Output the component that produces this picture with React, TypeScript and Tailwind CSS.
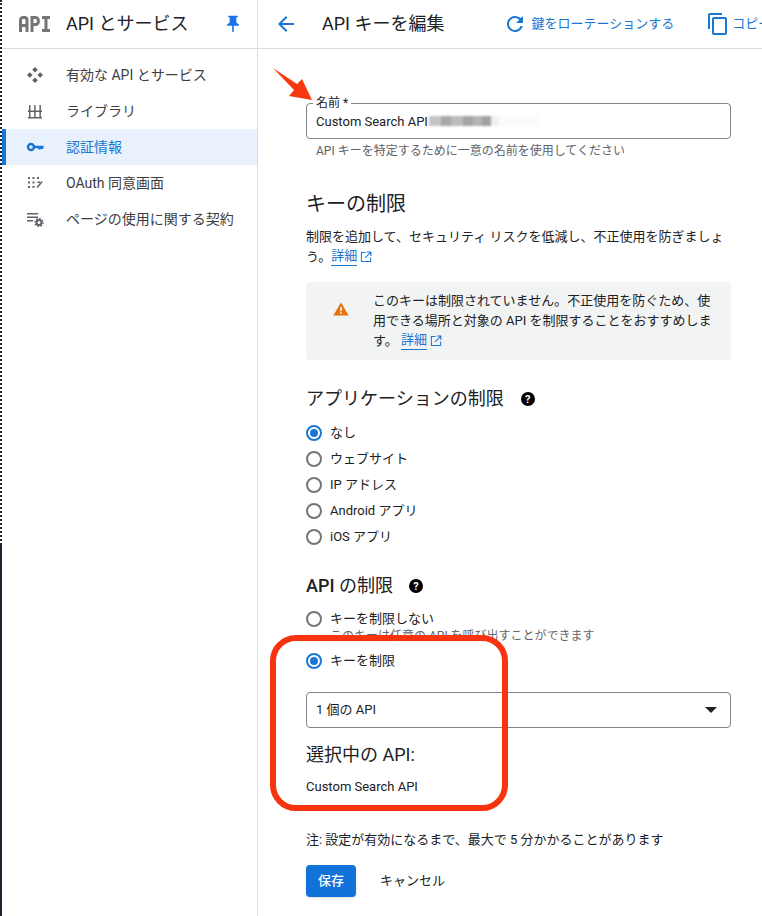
const FONT = "font-['Roboto','Noto_Sans_CJK_JP',sans-serif]";

function ApiLogo() {
  return (
    <svg className="w-[32px] h-[16px]" viewBox="0 0 32 16" fill="none" stroke="#757575" strokeWidth="3">
      <path d="M1.500 16V4a2.500 2.500 0 0 1 2.500-2.500h1.500A2.500 2.500 0 0 1 8 4v12M1.500 9.500H8" />
      <path d="M13 16V1.500h3.500a2.800 2.800 0 0 1 2.800 2.800v1.400a2.800 2.800 0 0 1-2.800 2.800H13" />
      <path d="M23 1.500h8M27 1.500v13M23 14.500h8" />
    </svg>
  );
}

function PinIcon() {
  return (
    <svg className="w-[20px] h-[20px]" viewBox="0 0 24 24" fill="#1a73e8">
      <path d="M16 9V4h1c.55 0 1-.45 1-1s-.45-1-1-1H7c-.55 0-1 .45-1 1s.45 1 1 1h1v5c0 1.660-1.340 3-3 3v2h5.970v7l1 1 1-1v-7H19v-2c-1.660 0-3-1.340-3-3z" />
    </svg>
  );
}

function ApisIcon() {
  return (
    <svg width="18" height="18" viewBox="0 0 18 18" fill="#5f6368">
      <path d="M9 1l2.800 2.800L9 6.600 6.200 3.800zM9 11.400l2.800 2.800L9 17l-2.800-2.800zM3.800 6.200L6.600 9l-2.800 2.800L1 9zM14.200 6.200L17 9l-2.800 2.800L11.400 9z" />
    </svg>
  );
}

function LibraryIcon() {
  return (
    <svg width="18" height="18" viewBox="0 0 18 18" fill="#5f6368">
      <path d="M2 15h14v1.500H2zM2 8.500h14V10H2zM3 3h1.500v5.500H3zM8.200 3h1.500v5.500H8.200zM13.400 3h1.500v5.500h-1.500zM3 10h1.500v5H3zM8.200 10h1.500v5H8.200zM13.400 10h1.500v5h-1.500z" />
    </svg>
  );
}

function KeyIcon() {
  return (
    <svg width="18" height="18" viewBox="0 0 18 18" fill="none" stroke="#1976d2" strokeWidth="2.400">
      <circle cx="5" cy="9" r="3" />
      <path d="M8 9h9.500M13.500 9v2.500M16 9v2" />
    </svg>
  );
}

function ConsentIcon() {
  return (
    <svg width="18" height="18" viewBox="0 0 18 18" fill="#5f6368">
      <path d="M2 3h2v2H2zM6.500 3h2v2h-2zM11 3h2v2h-2zM2 7.500h2v2H2zM6.500 7.500h2v2h-2zM2 12h2v2H2zM6.500 12h2v2h-2zM10.500 13l5-6 1.200 1-5 6zM11.500 7.500h2.500V9h-2.500z" />
    </svg>
  );
}

function TermsIcon() {
  return (
    <svg width="18" height="18" viewBox="0 0 18 18" fill="#5f6368">
      <path d="M1 3h11v1.500H1zM1 6.500h11V8H1zM1 10h6v1.500H1z" />
      <circle cx="13" cy="12.500" r="2.500" fill="none" stroke="#5f6368" strokeWidth="2" />
      <circle cx="13" cy="12.500" r="4" fill="none" stroke="#5f6368" strokeWidth="1.400" strokeDasharray="1.600 1.500" />
    </svg>
  );
}

function ExternalIcon() {
  return (
    <svg className="w-[12px] h-[12px] ml-[3px]" viewBox="0 0 13 13" fill="none" stroke="#1976d2" strokeWidth="1.100">
      <path d="M6 1.500H1.500v10h10V7M7.500 1.200h4.300v4.300M11.500 1.500L5.500 7.500" />
    </svg>
  );
}

function WarnIcon() {
  return (
    <svg className="w-[16px] h-[14px] mt-[11px] shrink-0" viewBox="0 0 16 14">
      <path d="M8 .5L15.700 13.500H.300z" fill="#e8710a" />
      <path d="M7.200 5h1.600v4.200H7.200zM7.200 10.200h1.600v1.600H7.200z" fill="#fff" />
    </svg>
  );
}

function NavItem({ icon, label, active }: { icon: React.ReactNode; label: string; active?: boolean }) {
  return (
    <div className={`flex items-center h-9 ${active ? "bg-[#e8f1fc] border-l-[4px] border-[#1976d2] pl-[20px] text-[#1976d2]" : "pl-[24px] text-[#3c4043]"}`}>
      <span className="w-[18px] h-[18px] flex items-center justify-center mr-[22px]">{icon}</span>
      <span className="text-sm">{label}</span>
    </div>
  );
}

function Radio({ label, checked }: { label: string; checked?: boolean }) {
  return (
    <div className="flex items-center h-[26px]">
      <span className={`w-4 h-4 rounded-full border-2 flex items-center justify-center ${checked ? "border-[#1976d2]" : "border-[#757575]"}`}>
        {checked && <span className="w-2 h-2 rounded-full bg-[#1976d2]" />}
      </span>
      <span className="ml-2 text-[13px] text-[#202124]">{label}</span>
    </div>
  );
}

function HelpDot() {
  return (
    <span className="inline-flex items-center justify-center w-[14px] h-[14px] rounded-full bg-black text-white text-[11px] font-bold leading-none">?</span>
  );
}

function Detail() {
  return (
    <span className="inline-flex items-center align-top text-[#1976d2] text-[13px]">
      <span className="border-b border-[#1976d2] leading-[18px]">詳細</span>
      <ExternalIcon />
    </span>
  );
}

export default function App() {
  return (
    <div className={`${FONT} relative flex w-[762px] h-[916px] overflow-hidden bg-white text-[#202124]`}>
      {/* screenshot edge */}
      <div className="w-[2px] shrink-0 flex flex-col">
        <div className="h-[545px] border-l-2 border-dotted border-[#1e2633]" />
        <div className="flex-1 bg-[#1e2633]" />
      </div>

      {/* left nav */}
      <aside className="w-[256px] shrink-0 border-r border-[#dadce0]">
        <div className="flex items-center h-[49px] border-b border-[#dadce0] pl-[17px] pr-[14px]">
          <ApiLogo />
          <span className="ml-[15px] text-lg text-[#202124]">API とサービス</span>
          <span className="ml-auto"><PinIcon /></span>
        </div>
        <nav className="pt-2">
          <NavItem icon={<ApisIcon />} label="有効な API とサービス" />
          <NavItem icon={<LibraryIcon />} label="ライブラリ" />
          <NavItem icon={<KeyIcon />} label="認証情報" active />
          <NavItem icon={<ConsentIcon />} label="OAuth 同意画面" />
          <NavItem icon={<TermsIcon />} label="ページの使用に関する契約" />
        </nav>
      </aside>

      {/* main */}
      <main className="flex-1 min-w-0">
        <div className="flex items-center h-[49px] border-b border-[#dadce0] pl-[16px] whitespace-nowrap overflow-hidden">
          <svg className="w-6 h-6 shrink-0" viewBox="0 0 24 24" fill="#1976d2">
            <path d="M20 11H7.830l5.590-5.590L12 4l-8 8 8 8 1.410-1.410L7.830 13H20v-2z" />
          </svg>
          <span className="ml-[24px] text-lg text-[#202124]">API キーを編集</span>
          <svg className="ml-[59px] w-6 h-6 shrink-0" viewBox="0 0 24 24" fill="#1976d2">
            <path d="M17.650 6.350C16.200 4.900 14.210 4 12 4c-4.420 0-7.990 3.580-7.990 8s3.570 8 7.990 8c3.730 0 6.840-2.550 7.730-6h-2.080c-.82 2.330-3.040 4-5.650 4-3.310 0-6-2.690-6-6s2.690-6 6-6c1.660 0 3.140.69 4.220 1.780L13 11h7V4l-2.350 2.350z" />
          </svg>
          <span className="ml-[4px] text-[13px] text-[#1976d2]">鍵をローテーションする</span>
          <svg className="ml-[32px] w-6 h-6 shrink-0" viewBox="0 0 24 24" fill="#1976d2">
            <path d="M16 1H4c-1.100 0-2 .9-2 2v14h2V3h12V1zm3 4H8c-1.100 0-2 .9-2 2v14c0 1.100.9 2 2 2h11c1.100 0 2-.9 2-2V7c0-1.100-.9-2-2-2zm0 16H8V7h11v14z" />
          </svg>
          <span className="ml-[2px] text-[13px] text-[#1976d2]">コピー</span>
        </div>

        <div className="pl-[48px] w-[473px]">
          {/* name field */}
          <div className="relative mt-[54px] h-[36px] rounded border border-[#80868b] pl-[9px] flex items-center text-[13px]">
            <span className="absolute -top-[8px] left-[6px] bg-white px-[3px] text-[12px] leading-[14px]">名前 *</span>
            <span className="pt-[1px]">Custom Search API</span>
            {/* blurred part of the key name */}
            <span className="ml-[1px] flex h-[10px] blur-[1px]">
              <span className="w-[12px] bg-[#c4c4c4]" />
              <span className="w-[10px] bg-[#a8a8a8]" />
              <span className="w-[12px] bg-[#bcbcbc]" />
              <span className="w-[10px] bg-[#a4a4a4]" />
              <span className="w-[9px] bg-[#b4b4b4]" />
              <span className="w-[9px] bg-[#a0a0a0]" />
              <span className="w-[8px] bg-[#f0f0f0]" />
              <span className="w-[40px] bg-[#fbfbfb]" />
            </span>
          </div>
          <p className="mt-[4px] pl-[10px] text-[12px] leading-[16px] text-[#5f6368]">API キーを特定するために一意の名前を使用してください</p>

          <h2 className="mt-[31px] text-xl leading-[28px]">キーの制限</h2>
          <p className="mt-[9px] text-[13px] leading-[20px]">
            制限を追加して、セキュリティ リスクを低減し、不正使用を防ぎましょう。<Detail />
          </p>

          <div className="mt-[15px] h-[78px] rounded bg-[#f2f3f3] flex pl-[27px] pr-[16px] pt-[9px]">
            <WarnIcon />
            <p className="ml-[24px] text-[13px] leading-[20px]">
              このキーは制限されていません。不正使用を防ぐため、使用できる場所と対象の API を制限することをおすすめします。 <Detail />
            </p>
          </div>

          <h2 className="mt-[27px] text-lg leading-[24px] flex items-center">
            アプリケーションの制限<span className="ml-[17px] flex"><HelpDot /></span>
          </h2>
          <div className="mt-[9px]">
            <Radio label="なし" checked />
            <Radio label="ウェブサイト" />
            <Radio label="IP アドレス" />
            <Radio label="Android アプリ" />
            <Radio label="iOS アプリ" />
          </div>

          <h2 className="mt-[24px] text-lg leading-[24px] flex items-center">
            <span className="font-medium">API&nbsp;</span>の制限<span className="ml-[16px] flex"><HelpDot /></span>
          </h2>
          <div className="mt-[8px]">
            <Radio label="キーを制限しない" />
            <p className="pl-[24px] -mt-[4px] text-[12px] leading-[16px] text-[#5f6368]">このキーは任意の API を呼び出すことができます</p>
            <div className="mt-[4px]"><Radio label="キーを制限" checked /></div>
          </div>

          <div className="mt-[18px] h-[36px] rounded border border-[#80868b] pl-[9px] pr-[13px] flex items-center justify-between text-[13px]">
            <span>1 個の API</span>
            <span className="w-0 h-0 border-x-[6px] border-x-transparent border-t-[6px] border-t-[#202124]" />
          </div>

          <h3 className="mt-[15px] text-lg leading-[24px]">選択中の API:</h3>
          <p className="mt-[12px] text-[13px] leading-[16px]">Custom Search API</p>

          <p className="mt-[35px] text-[13px] leading-[20px]">注: 設定が有効になるまで、最大で 5 分かかることがあります</p>

          <div className="mt-[15px] flex items-center">
            <button className="w-[50px] h-[32px] rounded bg-[#1173d9] text-white text-[13px] font-medium shadow">保存</button>
            <button className="ml-[24px] text-[13px] text-[#202124]">キャンセル</button>
          </div>
        </div>
      </main>

      {/* annotation */}
      <div className="absolute left-[270px] top-[635px] w-[238px] h-[176px] rounded-[26px] border-[6px] border-[#f8330f] pointer-events-none" />
      <svg className="absolute left-[272px] top-[68px] w-[44px] h-[36px] pointer-events-none" viewBox="0 0 44 36">
        <path d="M1 0L25 16L30 11L40 32L17 28L22 22Z" fill="#f6390f" />
      </svg>
    </div>
  );
}
